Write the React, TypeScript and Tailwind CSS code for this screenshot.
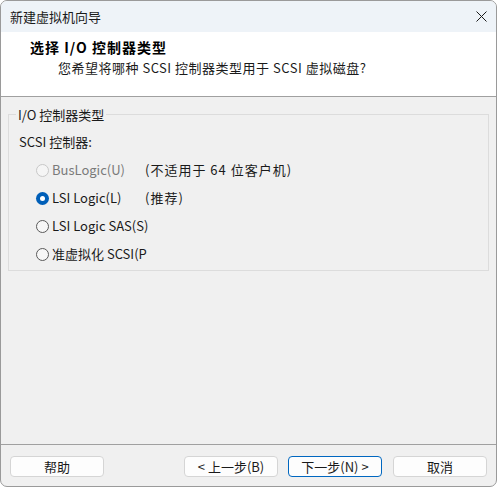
import React from "react";

const font = { fontFamily: '"Noto Sans CJK SC", "Noto Sans", sans-serif' };

function Radio({ state }: { state: "on" | "off" | "disabled" }) {
  if (state === "on") {
    return (
      <span className="flex h-[13px] w-[13px] items-center justify-center rounded-full bg-[#005fb8]">
        <span className="h-[5px] w-[5px] rounded-full bg-white" />
      </span>
    );
  }
  if (state === "disabled") {
    return <span className="block h-[13px] w-[13px] rounded-full border border-[#c8c8c8] bg-[#f5f5f5]" />;
  }
  return <span className="block h-[13px] w-[13px] rounded-full border border-[#5a5a5a] bg-[#f7f7f7]" />;
}

function Row({
  state,
  label,
  note,
  clip,
}: {
  state: "on" | "off" | "disabled";
  label: string;
  note?: string;
  clip?: boolean;
}) {
  return (
    <div className="flex h-[28px] items-center">
      <div className="ml-[27px] flex items-center">
        <Radio state={state} />
        <span
          className={
            "ml-[3px] whitespace-nowrap text-[13px] leading-[16px] " +
            (state === "disabled" ? "text-[#7a7a7a]" : "text-[#1a1a1a]") +
            (clip ? " w-[106px] overflow-hidden" : " w-[93px]")
          }
        >
          {label}
        </span>
      </div>
      {note && (
        <span className="whitespace-nowrap text-[13px] leading-[16px] tracking-[1px] text-[#1a1a1a]">{note}</span>
      )}
    </div>
  );
}

function Btn({ children, primary }: { children: React.ReactNode; primary?: boolean }) {
  return (
    <button
      className={
        "flex h-[21px] w-[94px] items-center justify-center rounded-[4px] bg-[#fdfdfd] text-[13px] leading-none text-[#1a1a1a] " +
        (primary ? "border border-[#0067c0]" : "border border-[#d5d5d5]")
      }
    >
      {children}
    </button>
  );
}

export default function App() {
  return (
    <div className="h-[488px] w-[499px] bg-white" style={font}>
      <div className="flex h-[487px] w-[497px] flex-col overflow-hidden rounded-[7px] border border-[#9a9a9a] bg-[#f0f0f0]">
        {/* title bar */}
        <div className="flex h-[31px] shrink-0 items-center justify-between bg-[#eef3f8] pl-[9px] pr-[9px]">
          <span className="text-[13px] leading-none text-[#1a1a1a]">新建虚拟机向导</span>
          <svg width="11" height="11" viewBox="0 0 11 11">
            <path d="M0.5 0.5 L10.5 10.5 M10.5 0.5 L0.5 10.5" stroke="#1a1a1a" strokeWidth="1" />
          </svg>
        </div>
        {/* header */}
        <div className="flex h-[65px] shrink-0 flex-col border-b border-[#a0a0a0] bg-white pl-[29px] pt-[6px]">
          <div className="text-[14px] font-bold leading-[18px] tracking-[1px] text-[#000]">选择 I/O 控制器类型</div>
          <div className="mt-[3px] pl-[28px] text-[13px] leading-[18px] tracking-[0.5px] text-[#1a1a1a]">
            您希望将哪种 SCSI 控制器类型用于 SCSI 虚拟磁盘?
          </div>
        </div>
        {/* body */}
        <div className="flex-1 px-[7px] pt-[17px]">
          <div className="relative h-[157px] border border-[#dcdcdc]">
            <span className="absolute left-[7px] top-[-9px] bg-[#f0f0f0] px-[2px] text-[13px] leading-[17px] text-[#1a1a1a]">
              I/O 控制器类型
            </span>
            <div className="pt-[13px]">
              <div className="flex h-[28px] items-center pl-[10px] text-[13px] leading-[16px] text-[#1a1a1a]">
                SCSI 控制器:
              </div>
              <Row state="disabled" label="BusLogic(U)" note="(不适用于 64 位客户机)" />
              <Row state="on" label="LSI Logic(L)" note="(推荐)" />
              <Row state="off" label="LSI Logic SAS(S)" />
              <Row state="off" label="准虚拟化 SCSI(P" clip />
            </div>
          </div>
        </div>
        {/* footer */}
        <div className="flex h-[42px] shrink-0 items-start border-t border-[#a0a0a0] px-[9px] pt-[11px]">
          <Btn>帮助</Btn>
          <div className="flex-1" />
          <Btn>&lt; 上一步(B)</Btn>
          <div className="w-[10px]" />
          <Btn primary>下一步(N) &gt;</Btn>
          <div className="w-[11px]" />
          <Btn>取消</Btn>
        </div>
      </div>
    </div>
  );
}
